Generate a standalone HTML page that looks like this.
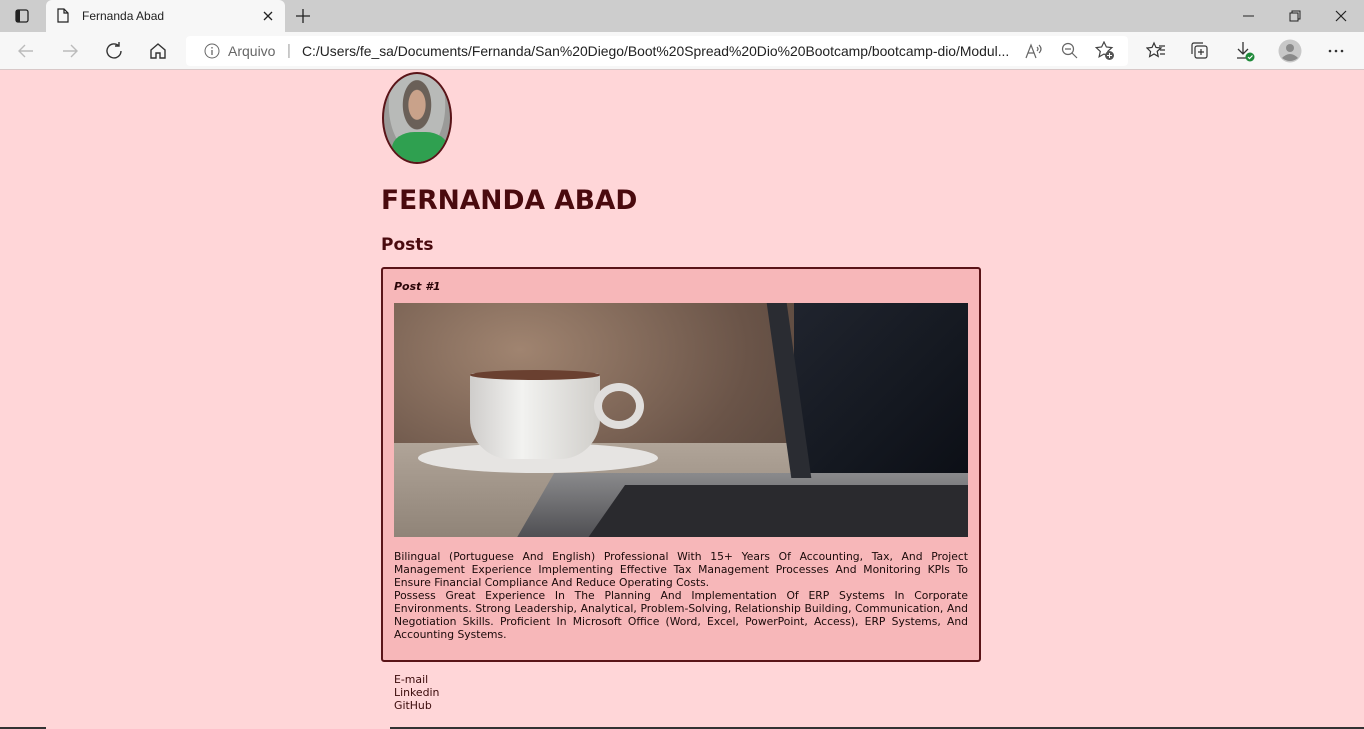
<!DOCTYPE html>
<html><head><meta charset="utf-8"><style>
*{margin:0;padding:0;box-sizing:border-box}
body{width:1364px;height:729px;overflow:hidden;background:#ffd6d8;font-family:"Liberation Sans",sans-serif;position:relative}
.tabbar{position:absolute;top:0;left:0;width:1364px;height:32px;background:#cdcdcd}
.tab{position:absolute;left:46px;top:0;width:239px;height:32px;background:#f7f7f7;border-radius:6px 6px 0 0}
.tab span{position:absolute;left:36px;top:9px;font-size:12px;color:#222}
.toolbar{position:absolute;top:32px;left:0;width:1364px;height:38px;background:#f7f7f7;border-bottom:1px solid #d8c8c8}
.url{position:absolute;left:186px;top:4px;width:942px;height:30px;background:#fff;border-radius:4px}
.url .a{position:absolute;left:42px;top:7px;font-size:14px;color:#666}
.url .p{position:absolute;left:116px;top:7px;font-size:13.9px;color:#222;white-space:nowrap}
svg{position:absolute}
.main{position:absolute;left:381px;top:71px;width:600px;color:#4a0a0e}
h1{position:absolute;top:114px;left:0;font:bold 26.5px "DejaVu Sans",sans-serif;color:#4a0a0e;letter-spacing:0}
h2{position:absolute;top:164px;left:0;font:bold 17px "DejaVu Sans",sans-serif;color:#4a0a0e}
.card{position:absolute;top:196px;left:0;width:600px;height:395px;background:#f7b7b9;border:2px solid #5a1418;border-radius:3px}
.card h3{position:absolute;left:11px;top:11px;font:italic bold 11px "DejaVu Sans",sans-serif;color:#2a0508}
.img{position:absolute;left:11px;top:34px;width:574px;height:234px;overflow:hidden;background:linear-gradient(90deg,#6e5445 0%,#8a6a52 25%,#7a5a45 50%,#3a3434 70%,#1e2028 100%)}
.txt{position:absolute;left:11px;top:281px;width:574px;font:10.75px/13px "DejaVu Sans",sans-serif;text-align:justify;color:#1a0a0a}
.links{position:absolute;left:13px;top:602px;font:10.9px/13px "DejaVu Sans",sans-serif;color:#3a0a0a}
</style></head><body>
<div class="tabbar">
<svg style="left:15px;top:9px" width="14" height="14"><rect x="1" y="1" width="12" height="12" rx="2" fill="none" stroke="#222" stroke-width="1.3"/><rect x="1" y="1" width="4" height="12" fill="#222"/></svg>
<div class="tab"><svg style="left:11px;top:8px" width="12" height="15"><path d="M1 1h6l4 4v9H1z M7 1v4h4" fill="none" stroke="#222" stroke-width="1.2"/></svg><span>Fernanda Abad</span>
<svg style="left:217px;top:11px" width="10" height="10"><path d="M1 1L9 9M9 1L1 9" stroke="#222" stroke-width="1.3"/></svg></div>
<svg style="left:295px;top:8px" width="16" height="16"><path d="M8 1v14M1 8h14" stroke="#222" stroke-width="1.3"/></svg>
<svg style="left:1243px;top:15px" width="12" height="2"><path d="M0 1h11" stroke="#222"/></svg>
<svg style="left:1289px;top:10px" width="12" height="12"><rect x="1" y="3" width="8" height="8" fill="none" stroke="#222"/><path d="M3 3V1h8v8H9" fill="none" stroke="#222"/></svg>
<svg style="left:1335px;top:10px" width="12" height="12"><path d="M1 1L11 11M11 1L1 11" stroke="#222" stroke-width="1.2"/></svg>
</div>
<div class="toolbar">
<svg style="left:17px;top:11px" width="18" height="16"><path d="M16 8H2M8 2L2 8l6 6" fill="none" stroke="#bbb" stroke-width="1.4"/></svg>
<svg style="left:61px;top:11px" width="18" height="16"><path d="M2 8h14M10 2l6 6-6 6" fill="none" stroke="#bbb" stroke-width="1.4"/></svg>
<svg style="left:105px;top:10px" width="18" height="18"><path d="M14 4A7 7 0 1 0 16 9M14 0v4h-4" fill="none" stroke="#333" stroke-width="1.4"/></svg>
<svg style="left:149px;top:10px" width="18" height="18"><path d="M2 8L9 2l7 6v8h-5v-5H7v5H2z" fill="none" stroke="#333" stroke-width="1.4"/></svg>
<div class="url">
<svg style="left:18px;top:7px" width="16" height="16"><circle cx="8" cy="8" r="7" fill="none" stroke="#666"/><path d="M8 7v5M8 4v1.5" stroke="#666" stroke-width="1.3"/></svg>
<span class="a">Arquivo</span><span style="position:absolute;left:101px;top:6px;color:#aaa;font-size:15px">|</span>
<span class="p">C:/Users/fe_sa/Documents/Fernanda/San%20Diego/Boot%20Spread%20Dio%20Bootcamp/bootcamp-dio/Modul...</span>
</div>
<svg style="left:1025px;top:10px" width="18" height="18"><path d="M1 16L6 3l5 13M3 11h6M12 5q2 2 0 4M14 3q4 4 0 8" fill="none" stroke="#666" stroke-width="1.2"/></svg>
<svg style="left:1061px;top:10px" width="18" height="18"><circle cx="7" cy="7" r="5.5" fill="none" stroke="#666" stroke-width="1.2"/><path d="M4 7h6M11 11l5 5" stroke="#666" stroke-width="1.2"/></svg>
<svg style="left:1095px;top:9px" width="20" height="20"><path d="M9 1l2.4 5 5.5.6-4.1 3.7 1.2 5.4L9 13l-4.9 2.8 1.2-5.4L1.2 6.6l5.4-.6z" fill="none" stroke="#444" stroke-width="1.2"/><circle cx="14.5" cy="14.5" r="4.5" fill="#555"/><path d="M14.5 12v5M12 14.5h5" stroke="#fff"/></svg>
<svg style="left:1146px;top:9px" width="20" height="20"><path d="M8 2l2 4.5 5 .5-3.8 3.4 1 5L8 13l-4.4 2.6 1-5L1 7l5-.5z" fill="none" stroke="#333" stroke-width="1.2"/><path d="M13 5h6M14 9h5M14 13h5" stroke="#333" stroke-width="1.2"/></svg>
<svg style="left:1190px;top:9px" width="20" height="20"><rect x="5" y="5" width="12" height="12" rx="2" fill="none" stroke="#333" stroke-width="1.2"/><path d="M2 13V4q0-2 2-2h9M11 8v6M8 11h6" fill="none" stroke="#333" stroke-width="1.2"/></svg>
<svg style="left:1235px;top:9px" width="22" height="22"><path d="M8 1v12M3 8l5 5 5-5M2 17h10" fill="none" stroke="#333" stroke-width="1.3"/><circle cx="15" cy="16" r="4.5" fill="#1f8a3a"/><path d="M13 16l1.5 1.5 3-3" fill="none" stroke="#fff" stroke-width="1.2"/></svg>
<svg style="left:1278px;top:7px" width="24" height="24"><circle cx="12" cy="12" r="11.5" fill="#c8c8c8"/><circle cx="12" cy="9" r="4" fill="#8a8a8a"/><path d="M4 19q8-8 16 0q-8 6-16 0" fill="#8a8a8a"/></svg>
<svg style="left:1328px;top:17px" width="16" height="4"><circle cx="2" cy="2" r="1.3" fill="#333"/><circle cx="8" cy="2" r="1.3" fill="#333"/><circle cx="14" cy="2" r="1.3" fill="#333"/></svg>
</div>
<div class="main">
<div style="position:absolute;left:1px;top:1px;width:70px;height:92px;border-radius:50%;border:2px solid #5a1418;overflow:hidden;background:radial-gradient(ellipse at 50% 35%,#c9a28a 0 18%,#6a6058 19% 30%,#b8bab8 31% 60%,#9a9a98 61%)">
<div style="position:absolute;left:8px;top:58px;width:56px;height:40px;background:#2fa050;border-radius:40% 40% 0 0"></div></div>
<h1>FERNANDA ABAD</h1>
<h2>Posts</h2>
<div class="card">
<h3>Post #1</h3>
<div class="img">
<div style="position:absolute;left:0;top:0;width:420px;height:234px;background:radial-gradient(ellipse at 30% 20%,#a08470 0,#6a5448 55%,#4a3c34 100%)"></div>
<div style="position:absolute;left:0;top:140px;width:574px;height:94px;background:linear-gradient(#b0a498,#908478)"></div>
<div style="position:absolute;left:24px;top:140px;width:240px;height:30px;border-radius:50%;background:#e6e4e2"></div>
<div style="position:absolute;left:76px;top:70px;width:130px;height:86px;background:linear-gradient(90deg,#cfcdcb,#f2f2f0 40%,#d0ceca);border-radius:4px 4px 40px 40px"></div>
<div style="position:absolute;left:76px;top:67px;width:130px;height:10px;border-radius:50%;background:#6a4030"></div>
<div style="position:absolute;left:200px;top:80px;width:50px;height:46px;border:8px solid #e0dedc;border-radius:50%"></div>
<div style="position:absolute;left:140px;top:170px;width:440px;height:70px;background:linear-gradient(#8a8a8c,#4a4a4e);transform:skewX(-30deg)"></div>
<div style="position:absolute;left:210px;top:182px;width:380px;height:60px;background:#2a2a2e;transform:skewX(-35deg)"></div>
<div style="position:absolute;left:400px;top:0;width:174px;height:170px;background:linear-gradient(135deg,#20242e,#141820 60%,#0c0f16)"></div>
<div style="position:absolute;left:385px;top:0;width:20px;height:175px;background:#2a2c32;transform:skewX(8deg)"></div>
</div>
<div class="txt">Bilingual (Portuguese And English) Professional With 15+ Years Of Accounting, Tax, And Project Management Experience Implementing Effective Tax Management Processes And Monitoring KPIs To Ensure Financial Compliance And Reduce Operating Costs.<br>Possess Great Experience In The Planning And Implementation Of ERP Systems In Corporate Environments. Strong Leadership, Analytical, Problem-Solving, Relationship Building, Communication, And Negotiation Skills. Proficient In Microsoft Office (Word, Excel, PowerPoint, Access), ERP Systems, And Accounting Systems.</div>
</div>
<div class="links">E-mail<br>Linkedin<br>GitHub</div>
</div>
<div style="position:absolute;left:0;top:727px;width:46px;height:2px;background:#333"></div>
<div style="position:absolute;left:390px;top:727px;width:974px;height:2px;background:#333"></div>
</body></html>
